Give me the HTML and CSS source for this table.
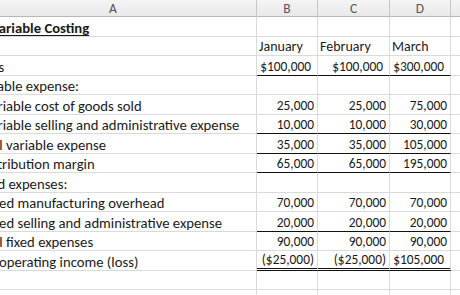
FILE: index.html
```html
<!DOCTYPE html>
<html>
<head>
<meta charset="utf-8">
<link rel="stylesheet" href="styles.css">
</head>
<body>
<div class="viewport">
  <div class="sheet">
    <div class="hd">A</div><div class="hd">B</div><div class="hd">C</div><div class="hd">D</div><div class="hd"></div>

    <div class="c lbl title"><span>Variable Costing</span></div><div class="c"></div><div class="c"></div><div class="c"></div><div class="c"></div>

    <div class="c lbl"></div><div class="c txt">January</div><div class="c txt">February</div><div class="c txt">March</div><div class="c"></div>

    <div class="c lbl">Sales</div><div class="c num cur ul">$100,000</div><div class="c num cur ul">$100,000</div><div class="c num cur ul">$300,000</div><div class="c"></div>

    <div class="c lbl">Variable expense:</div><div class="c"></div><div class="c"></div><div class="c"></div><div class="c"></div>

    <div class="c lbl ind">Variable cost of goods sold</div><div class="c num">25,000</div><div class="c num">25,000</div><div class="c num">75,000</div><div class="c"></div>

    <div class="c lbl ind">Variable selling and administrative expense</div><div class="c num ul">10,000</div><div class="c num ul">10,000</div><div class="c num ul">30,000</div><div class="c"></div>

    <div class="c lbl">Total variable expense</div><div class="c num ul">35,000</div><div class="c num ul">35,000</div><div class="c num ul">105,000</div><div class="c"></div>

    <div class="c lbl">Contribution margin</div><div class="c num ul">65,000</div><div class="c num ul">65,000</div><div class="c num ul">195,000</div><div class="c"></div>

    <div class="c lbl">Fixed expenses:</div><div class="c"></div><div class="c"></div><div class="c"></div><div class="c"></div>

    <div class="c lbl ind">Fixed manufacturing overhead</div><div class="c num">70,000</div><div class="c num">70,000</div><div class="c num">70,000</div><div class="c"></div>

    <div class="c lbl ind">Fixed selling and administrative expense</div><div class="c num ul">20,000</div><div class="c num ul">20,000</div><div class="c num ul">20,000</div><div class="c"></div>

    <div class="c lbl">Total fixed expenses</div><div class="c num">90,000</div><div class="c num">90,000</div><div class="c num">90,000</div><div class="c"></div>

    <div class="c lbl">Net operating income (loss)</div><div class="c num dbl">($25,000)</div><div class="c num dbl">($25,000)</div><div class="c num cur dbl">$105,000</div><div class="c"></div>

    <div class="c lbl"></div><div class="c"></div><div class="c"></div><div class="c"></div><div class="c"></div>

    <div class="c lbl"></div><div class="c"></div><div class="c"></div><div class="c"></div><div class="c"></div>
  </div>
</div>
</body>
</html>
```

FILE: styles.css
```css
html, body {
  margin: 0;
  padding: 0;
  background: #ffffff;
}

.viewport {
  width: 460px;
  height: 295px;
  overflow: hidden;
}

.sheet {
  margin-left: -30px;
  display: grid;
  grid-template-columns: 287px 61px 72px 61px 60px;
  grid-template-rows: 17px repeat(7, 20px 19px) 20px;
  font-family: Carlito, "Open Sans", "Noto Sans", sans-serif;
  font-size: 14.7px;
  color: #1a1a1a;
}

.hd {
  box-sizing: border-box;
  background: linear-gradient(#f4f4f4, #e9e9e9);
  border-right: 1px solid #c6c6c6;
  border-bottom: 1px solid #b8b8b8;
  color: #555555;
  font-size: 13.5px;
  line-height: 17px;
  text-align: center;
}

.c {
  box-sizing: border-box;
  border-right: 1px solid #dadada;
  border-bottom: 1px solid #dadada;
  display: flex;
  align-items: flex-end;
  padding: 0 3px 0 3px;
  white-space: nowrap;
  line-height: 16px;
}

.lbl {
  padding-left: 4px;
}

.lbl.ind {
  padding-left: 13px;
}

.lbl.title {
  padding-left: 21px;
  font-weight: bold;
}

.lbl.title span {
  text-decoration: underline;
  text-underline-offset: 2px;
}

.txt {
  justify-content: flex-start;
  padding-left: 2px;
  font-size: 14px;
}

.num {
  justify-content: flex-end;
  padding-right: 3px;
  font-size: 13.4px;
}

.num.cur {
  padding-right: 6px;
}

.ul {
  border-bottom-color: #111111;
}

.dbl {
  border-bottom: 3px double #111111;
}
```
